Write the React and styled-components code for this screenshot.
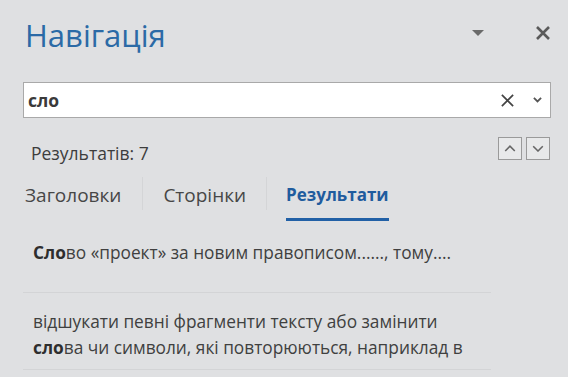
import styled, { createGlobalStyle } from 'styled-components';

const GlobalStyle = createGlobalStyle`
    html, body {
        margin: 0;
        padding: 0;
        background: #dfe0e2;
    }
    body {
        font-family: "Open Sans", "Noto Sans", sans-serif;
        color: #3b3b3b;
    }
`;

const Pane = styled.div`
    width: 568px;
    height: 377px;
    box-sizing: border-box;
    padding: 12px 17px 0 23px;
    background: #dfe0e2;
    overflow: hidden;
`;

// header
const Header = styled.div`
    display: flex;
    align-items: center;
    height: 46px;
`;

const Title = styled.h1`
    flex: 1;
    margin: 0 0 0 2px;
    font-size: 31px;
    font-weight: 400;
    color: #2b6aa6;
`;

const HeaderIcon = styled.button`
    border: none;
    background: none;
    padding: 0;
    display: flex;
    align-items: center;
    justify-content: flex-end;
    width: 24px;
    height: 24px;
    margin: 0 0 5px ${p => p.$gap || 0}px;
`;

// search
const SearchBox = styled.div`
    display: flex;
    align-items: center;
    height: 36px;
    margin-top: 24px;
    box-sizing: border-box;
    border: solid 1px #a9a9a9;
    background: #fff;
    padding: 0 8px 0 4px;
`;

const SearchText = styled.span`
    flex: 1;
    font-size: 17.5px;
    font-weight: 700;
    color: #3a3a3a;
`;

const BoxIcon = styled.span`
    display: flex;
    align-items: center;
    margin-left: ${p => p.$gap || 0}px;
`;

// results count
const CountRow = styled.div`
    display: flex;
    align-items: flex-start;
    justify-content: space-between;
    margin-top: 19px;
    padding-left: 8px;
`;

const Count = styled.span`
    padding-top: 4px;
    font-size: 17.5px;
    line-height: 24px;
    font-weight: 500;
    color: #3d3d3d;
`;

const Arrows = styled.div`
    display: flex;
    gap: 4px;
    margin-right: 1px;
`;

const ArrowButton = styled.button`
    width: 24px;
    height: 23px;
    padding: 0;
    border: solid 1px #9a9a9a;
    background: #e8e9ea;
    display: flex;
    align-items: center;
    justify-content: center;
`;

// tabs
const Tabs = styled.div`
    display: flex;
    margin: 12px 0 0 2px;
`;

const Tab = styled.div`
    padding: 6px 0 11px;
    margin-right: ${p => p.$gap}px;
    font-size: ${p => (p.$active ? 17 : 19)}px;
    line-height: 24px;
    font-weight: ${p => (p.$active ? 700 : 500)};
    color: ${p => (p.$active ? '#1f5c9e' : '#474747')};
    border-bottom: solid 3px ${p => (p.$active ? '#2160a6' : 'transparent')};
`;

const TabDivider = styled.span`
    width: 1px;
    height: 33px;
    align-self: flex-start;
    background: #d4d5d7;
    margin-right: ${p => p.$gap}px;
`;

// results
const ResultList = styled.div`
    margin-top: 3px;
    width: 468px;
`;

const Result = styled.div`
    padding: 16px 0 ${p => p.$pb}px 10px;
    border-bottom: solid 1px #d3d4d6;
    font-size: 17.3px;
    line-height: 26px;
    color: #404040;
    white-space: nowrap;
`;

const Hit = styled.b`
    font-weight: 700;
    color: #2e2e2e;
`;

const Triangle = () => (
    <svg width="14" height="8" viewBox="0 0 14 8">
        <path d="M1 1 L13 1 L7 7 Z" fill="#6a6a6a" />
    </svg>
);

const CloseIcon = ({ size = 16, weight = 2.6, color = '#5a5a5a' }) => (
    <svg width={size} height={size} viewBox="0 0 16 16">
        <path d="M2 2 L14 14 M14 2 L2 14" stroke={color} strokeWidth={weight} />
    </svg>
);

const Chevron = ({ dir = 'down', w = 10, color = '#555', sw = 1.6 }) => (
    <svg width={w} height={w * 0.6} viewBox="0 0 10 6">
        <path d={dir === 'down' ? 'M1 1 L5 5 L9 1' : 'M1 5 L5 1 L9 5'} fill="none" stroke={color} strokeWidth={sw} />
    </svg>
);

const App = () => {
    return (
        <>
            <GlobalStyle />
            <Pane>
                <Header>
                    <Title>Навігація</Title>
                    <HeaderIcon><Triangle /></HeaderIcon>
                    <HeaderIcon $gap={42}><CloseIcon /></HeaderIcon>
                </Header>
                <SearchBox>
                    <SearchText>сло</SearchText>
                    <BoxIcon><CloseIcon size={15} weight={1.8} color="#444" /></BoxIcon>
                    <BoxIcon $gap={18}><Chevron w={9} sw={2} color="#555" /></BoxIcon>
                </SearchBox>
                <CountRow>
                    <Count>Результатів: 7</Count>
                    <Arrows>
                        <ArrowButton><Chevron dir="up" w={12} sw={1.3} color="#666" /></ArrowButton>
                        <ArrowButton><Chevron w={12} sw={1.3} color="#666" /></ArrowButton>
                    </Arrows>
                </CountRow>
                <Tabs>
                    <Tab $gap={21}>Заголовки</Tab>
                    <TabDivider $gap={20} />
                    <Tab $gap={20}>Сторінки</Tab>
                    <TabDivider $gap={19} />
                    <Tab $active $gap={0}>Результати</Tab>
                </Tabs>
                <ResultList>
                    <Result $pb={26}>
                        <Hit>Сло</Hit>во «проект» за новим правописом......, тому....
                    </Result>
                    <Result $pb={8}>
                        відшукати певні фрагменти тексту або замінити<br />
                        <Hit>сло</Hit>ва чи символи, які повторюються, наприклад в
                    </Result>
                </ResultList>
            </Pane>
        </>
    );
};

export default App;
